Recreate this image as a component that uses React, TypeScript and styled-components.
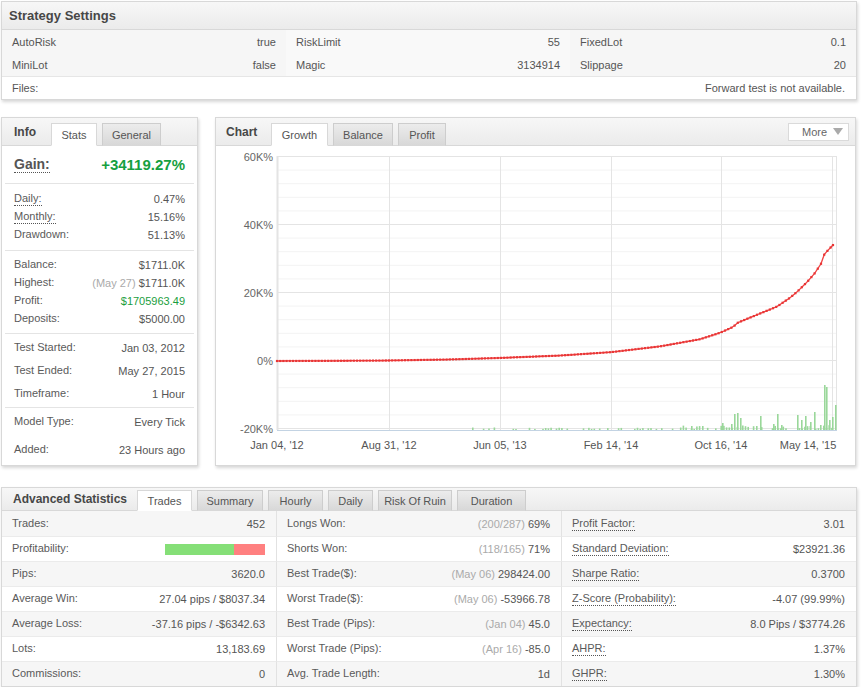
import React from 'react';
import styled, { createGlobalStyle } from 'styled-components';

const GlobalStyle = createGlobalStyle`
  * { box-sizing: border-box; }
  html, body { margin: 0; padding: 0; background: #fff; }
  body {
    font-family: "Liberation Sans", Arial, sans-serif;
    font-size: 11px;
    color: #555;
  }
`;

const Page = styled.div`
  width: 857px;
  padding: 1px 0 0 1px;
  display: flex;
  flex-direction: column;
`;

const Panel = styled.section`
  background: #fff;
  border: 1px solid #d8d8d8;
  box-shadow: 1px 2px 3px rgba(0, 0, 0, 0.16);
  display: flex;
  flex-direction: column;
`;

const PanelHead = styled.header<{ $h: number; $pad: number }>`
  height: ${(p) => p.$h}px;
  flex: none;
  display: flex;
  align-items: flex-end;
  padding-left: ${(p) => p.$pad}px;
  background: linear-gradient(#f7f7f7, #ebebeb);
  border-bottom: 1px solid #d8d8d8;
`;

const Title = styled.h2<{ $size: number; $w?: number }>`
  margin: 0;
  width: ${(p) => (p.$w ? `${p.$w}px` : 'auto')};
  flex: none;
  align-self: center;
  font-size: ${(p) => p.$size}px;
  font-weight: bold;
  color: #474747;
  white-space: nowrap;
`;

const Tabs = styled.div`
  display: flex;
  gap: 5px;
  margin-bottom: -1px;
`;

const Tab = styled.div<{ $active?: boolean; $h: number; $w: number }>`
  height: ${(p) => p.$h}px;
  width: ${(p) => p.$w}px;
  display: flex;
  align-items: center;
  justify-content: center;
  white-space: nowrap;
  border: 1px solid ${(p) => (p.$active ? '#d8d8d8' : '#cdcdcd')};
  border-bottom-color: ${(p) => (p.$active ? '#fff' : '#d8d8d8')};
  background: ${(p) => (p.$active ? '#fff' : 'linear-gradient(#ececec, #d8d8d8)')};
  color: #555;
`;

const MoreButton = styled.div`
  margin: 0 6px 0 auto;
  align-self: center;
  width: 61px;
  height: 18px;
  border: 1px solid #dadada;
  background: #fff;
  display: flex;
  align-items: center;
  justify-content: space-between;
  padding: 0 5px 0 13px;
  color: #666;
`;

const Caret = styled.span`
  width: 0;
  height: 0;
  border-left: 5px solid transparent;
  border-right: 5px solid transparent;
  border-top: 7px solid #aaa;
`;

/* strategy settings */

const ParamGrid = styled.div`
  display: grid;
  grid-template-columns: 284px 284px 1fr;
`;

const ParamCell = styled.div<{ $shade: string }>`
  height: 23px;
  display: flex;
  align-items: center;
  justify-content: space-between;
  padding: 0 10px;
  background: ${(p) => p.$shade};
`;

const FilesRow = styled.div`
  height: 23px;
  border-top: 1px solid #e6e6e6;
  display: flex;
  align-items: center;
  justify-content: space-between;
  padding: 0 11px 0 10px;
`;

/* middle */

const MiddleRow = styled.div`
  display: grid;
  grid-template-columns: 197px 641px;
  column-gap: 17px;
  margin: 17px 0 21px;
`;

const GainRow = styled.div`
  height: 37px;
  display: flex;
  align-items: center;
  justify-content: space-between;
  padding: 0 12px;
`;

const GainLabel = styled.span`
  font-size: 14px;
  font-weight: bold;
  color: #555;
  border-bottom: 1px dotted #555;
  line-height: 15px;
`;

const GainValue = styled.span`
  font-size: 15px;
  font-weight: bold;
  color: #16a03f;
`;

const Separator = styled.div`
  height: 1px;
  margin: 0 3px;
  background: #e4e4e4;
`;

const Group = styled.div<{ $pad: number }>`
  padding: ${(p) => p.$pad}px 12px;
`;

const InfoRow = styled.div<{ $h: number }>`
  height: ${(p) => p.$h}px;
  display: flex;
  align-items: center;
  justify-content: space-between;
`;

const Label = styled.span<{ $dotted?: boolean }>`
  color: #5a5a5a;
  line-height: 13px;
  border-bottom: ${(p) => (p.$dotted ? '1px dotted #555' : '1px solid transparent')};
`;

const Value = styled.span<{ $green?: boolean }>`
  color: ${(p) => (p.$green ? '#1a9e3e' : '#555')};
`;

const Dim = styled.span`
  color: #aaa;
`;

const ChartBody = styled.div`
  flex: 1;
`;

/* advanced statistics */

const StatsGrid = styled.div`
  display: grid;
  grid-template-columns: 275px 285px 1fr;
`;

const StatCell = styled.div<{ $alt: boolean; $first: boolean; $divider: boolean }>`
  height: 25px;
  display: flex;
  align-items: center;
  justify-content: space-between;
  padding: 0 11px 0 10px;
  background: ${(p) => (p.$alt ? '#f6f6f6' : '#fff')};
  border-top: ${(p) => (p.$first ? 'none' : '1px solid #ebebeb')};
  border-right: ${(p) => (p.$divider ? '1px solid #e2e2e2' : 'none')};
`;

const ProfitBar = styled.div`
  width: 100px;
  height: 11px;
  display: flex;
`;

const BarPart = styled.div<{ $color: string; $grow: number }>`
  flex: ${(p) => p.$grow};
  background: ${(p) => p.$color};
`;

/* chart drawing */

const OX = 216;
const yOf = (k: number) => 215 - 3.4 * k;

const CURVE: [number, number][] = [
  [277, 0], [330, 0.05], [389, 0.15], [450, 0.45], [500, 0.9], [560, 1.6],
  [611, 2.6], [660, 4.3], [700, 6.4], [720, 8.3], [733, 10.0], [738, 11.3],
  [757, 13.6], [777, 16.0], [790, 18.6], [798, 20.6], [807, 23.2], [815, 25.9],
  [821, 28.6], [824, 31.2], [828, 32.6], [833, 34.1],
];

function curvePoints(): [number, number][] {
  const pts: [number, number][] = [];
  for (let ax = 277; ax <= 833; ax += 3.2) {
    let i = 0;
    while (i < CURVE.length - 2 && CURVE[i + 1][0] < ax) i++;
    const [x0, y0] = CURVE[i];
    const [x1, y1] = CURVE[i + 1];
    const t = Math.min(1, Math.max(0, (ax - x0) / (x1 - x0)));
    pts.push([ax - OX, yOf(y0 + (y1 - y0) * t)]);
  }
  pts.push([833 - OX, yOf(34.1)]);
  return pts;
}

const BIG: [number, number][] = [
  [691, 4], [702, 4], [722, 7], [731, 6], [734, 16], [737, 17], [740, 12],
  [756, 4], [760, 14], [773, 6], [777, 16], [781, 5], [797, 15], [801, 10],
  [805, 14], [810, 8], [814, 18], [820, 5], [824, 45], [826, 43], [829, 10],
  [832, 13], [835, 25],
];

function barData(): [number, number][] {
  let s = 11;
  const rnd = () => {
    s = (s * 9301 + 49297) % 233280;
    return s / 233280;
  };
  const out: [number, number][] = [];
  for (let ax = 472; ax <= 836; ax += 2.7) {
    const late = ax > 680;
    const r = rnd();
    const h = r < (late ? 0.35 : 0.62) ? 0 : 1 + rnd() * (late ? 4 : 1.6);
    if (h > 0) out.push([ax, h]);
  }
  return out.concat(BIG);
}

const Y_LABELS: [string, number][] = [['60K%', 60], ['40K%', 40], ['20K%', 20], ['0%', 0], ['-20K%', -20]];
const V_LINES = [173, 284, 395, 505, 616];
const X_LABELS: [string, number][] = [
  ["Jan 04, '12", 61], ["Aug 31, '12", 173], ["Jun 05, '13", 284],
  ["Feb 14, '14", 395], ["Oct 16, '14", 505], ["May 14, '15", 592],
];

function GrowthChart() {
  const pts = curvePoints();
  const bars = barData();
  const left = 61;
  const right = 621;
  const top = 10;
  const bottom = 284;
  const grid = Array.from({ length: 21 }, (_, i) => ({ y: top + 0.5 + i * 13.6, major: i % 5 === 0 }));
  return (
    <svg width="639" height="319" style={{ display: 'block' }}>
      {grid.map((g, i) => (
        <line key={i} x1={left} x2={right} y1={g.y} y2={g.y} stroke={g.major ? '#e4e4e4' : '#f3f3f3'} strokeWidth="1" />
      ))}
      {[left + 0.5, ...V_LINES.map((v) => v + 0.5), right - 0.5].map((x, i) => (
        <line key={i} x1={x} x2={x} y1={top} y2={bottom} stroke="#e4e4e4" strokeWidth={i === 0 ? 2 : 1} />
      ))}
      {bars.map(([ax, h], i) => (
        <rect key={i} x={ax - OX} y={bottom - h} width="1.6" height={h} fill="#9ad79a" />
      ))}
      <line x1={left} x2={right} y1={bottom + 0.5} y2={bottom + 0.5} stroke="#c3d3e3" strokeWidth="1" />
      <polyline
        points={pts.map(([x, y]) => `${x},${y}`).join(' ')}
        fill="none"
        stroke="#f04545"
        strokeWidth="1.3"
      />
      {pts.map(([x, y], i) => (
        <rect key={i} x={x - 1.1} y={y - 1.1} width="2.2" height="2.2" fill="#e83535" />
      ))}
      {Y_LABELS.map(([t, k]) => (
        <text key={t} x="57" y={yOf(k) + 4} textAnchor="end" fontSize="11" fill="#666" fontFamily="Liberation Sans, Arial, sans-serif">
          {t}
        </text>
      ))}
      {X_LABELS.map(([t, x]) => (
        <text key={t} x={x} y="303" textAnchor="middle" fontSize="11" fill="#555" fontFamily="Liberation Sans, Arial, sans-serif">
          {t}
        </text>
      ))}
    </svg>
  );
}

/* data */

const PARAMS: [string, string][][] = [
  [['AutoRisk', 'true'], ['RiskLimit', '55'], ['FixedLot', '0.1']],
  [['MiniLot', 'false'], ['Magic', '3134914'], ['Slippage', '20']],
];
const PARAM_SHADES = ['#f6f6f6', '#f9f9f9', '#f6f6f6'];

const INFO_TABS: [string, number][] = [['Stats', 46], ['General', 59]];
const CHART_TABS: [string, number][] = [['Growth', 57], ['Balance', 60], ['Profit', 48]];
const STAT_TABS: [string, number][] = [
  ['Trades', 55], ['Summary', 66], ['Hourly', 55], ['Daily', 45], ['Risk Of Ruin', 74], ['Duration', 69],
];

type Stat = { label: string; dim?: string; value?: string; bar?: boolean };

const STATS: Stat[][] = [
  [{ label: 'Trades:', value: '452' }, { label: 'Longs Won:', dim: '(200/287)', value: '69%' }, { label: 'Profit Factor:', value: '3.01' }],
  [{ label: 'Profitability:', bar: true }, { label: 'Shorts Won:', dim: '(118/165)', value: '71%' }, { label: 'Standard Deviation:', value: '$23921.36' }],
  [{ label: 'Pips:', value: '3620.0' }, { label: 'Best Trade($):', dim: '(May 06)', value: '298424.00' }, { label: 'Sharpe Ratio:', value: '0.3700' }],
  [{ label: 'Average Win:', value: '27.04 pips / $8037.34' }, { label: 'Worst Trade($):', dim: '(May 06)', value: '-53966.78' }, { label: 'Z-Score (Probability):', value: '-4.07 (99.99%)' }],
  [{ label: 'Average Loss:', value: '-37.16 pips / -$6342.63' }, { label: 'Best Trade (Pips):', dim: '(Jan 04)', value: '45.0' }, { label: 'Expectancy:', value: '8.0 Pips / $3774.26' }],
  [{ label: 'Lots:', value: '13,183.69' }, { label: 'Worst Trade (Pips):', dim: '(Apr 16)', value: '-85.0' }, { label: 'AHPR:', value: '1.37%' }],
  [{ label: 'Commissions:', value: '0' }, { label: 'Avg. Trade Length:', value: '1d' }, { label: 'GHPR:', value: '1.30%' }],
];

function TabList({ tabs, h }: { tabs: [string, number][]; h: number }) {
  return (
    <Tabs>
      {tabs.map(([t, w], i) => (
        <Tab key={t} $h={h} $w={w} $active={i === 0}>
          {t}
        </Tab>
      ))}
    </Tabs>
  );
}

export default function App() {
  return (
    <>
      <GlobalStyle />
      <Page>
        <Panel>
          <PanelHead $h={28} $pad={7}>
            <Title $size={13}>Strategy Settings</Title>
          </PanelHead>
          <ParamGrid>
            {PARAMS.flatMap((row, r) =>
              row.map(([k, v], c) => (
                <ParamCell key={`${r}-${c}`} $shade={PARAM_SHADES[c]}>
                  <span>{k}</span>
                  <span>{v}</span>
                </ParamCell>
              ))
            )}
          </ParamGrid>
          <FilesRow>
            <span>Files:</span>
            <span>Forward test is not available.</span>
          </FilesRow>
        </Panel>

        <MiddleRow>
          <Panel>
            <PanelHead $h={28} $pad={12}>
              <Title $size={12} $w={37}>Info</Title>
              <TabList tabs={INFO_TABS} h={23} />
            </PanelHead>
            <GainRow>
              <GainLabel>Gain:</GainLabel>
              <GainValue>+34119.27%</GainValue>
            </GainRow>
            <Separator />
            <Group $pad={6}>
              <InfoRow $h={18}><Label $dotted>Daily:</Label><Value>0.47%</Value></InfoRow>
              <InfoRow $h={18}><Label $dotted>Monthly:</Label><Value>15.16%</Value></InfoRow>
              <InfoRow $h={18}><Label>Drawdown:</Label><Value>51.13%</Value></InfoRow>
            </Group>
            <Separator />
            <Group $pad={5}>
              <InfoRow $h={18}><Label>Balance:</Label><Value>$1711.0K</Value></InfoRow>
              <InfoRow $h={18}><Label>Highest:</Label><Value><Dim>(May 27)</Dim> $1711.0K</Value></InfoRow>
              <InfoRow $h={18}><Label>Profit:</Label><Value $green>$1705963.49</Value></InfoRow>
              <InfoRow $h={18}><Label>Deposits:</Label><Value>$5000.00</Value></InfoRow>
            </Group>
            <Separator />
            <Group $pad={2}>
              <InfoRow $h={23}><Label>Test Started:</Label><Value>Jan 03, 2012</Value></InfoRow>
              <InfoRow $h={23}><Label>Test Ended:</Label><Value>May 27, 2015</Value></InfoRow>
              <InfoRow $h={23}><Label>Timeframe:</Label><Value>1 Hour</Value></InfoRow>
            </Group>
            <Separator />
            <Group $pad={0}>
              <InfoRow $h={28}><Label>Model Type:</Label><Value>Every Tick</Value></InfoRow>
              <InfoRow $h={28}><Label>Added:</Label><Value>23 Hours ago</Value></InfoRow>
            </Group>
          </Panel>

          <Panel>
            <PanelHead $h={28} $pad={10}>
              <Title $size={12} $w={45}>Chart</Title>
              <TabList tabs={CHART_TABS} h={23} />
              <MoreButton>
                More
                <Caret />
              </MoreButton>
            </PanelHead>
            <ChartBody>
              <GrowthChart />
            </ChartBody>
          </Panel>
        </MiddleRow>

        <Panel>
          <PanelHead $h={23} $pad={11}>
            <Title $size={12} $w={124}>Advanced Statistics</Title>
            <TabList tabs={STAT_TABS} h={21} />
          </PanelHead>
          <StatsGrid>
            {STATS.flatMap((row, r) =>
              row.map((s, c) => (
                <StatCell key={`${r}-${c}`} $alt={r % 2 === 0} $first={r === 0} $divider={c < 2}>
                  <Label $dotted={c === 2}>{s.label}</Label>
                  {s.bar ? (
                    <ProfitBar>
                      <BarPart $color="#85df77" $grow={69} />
                      <BarPart $color="#ff8080" $grow={31} />
                    </ProfitBar>
                  ) : (
                    <Value>
                      {s.dim && <Dim>{s.dim} </Dim>}
                      {s.value}
                    </Value>
                  )}
                </StatCell>
              ))
            )}
          </StatsGrid>
        </Panel>
      </Page>
    </>
  );
}
